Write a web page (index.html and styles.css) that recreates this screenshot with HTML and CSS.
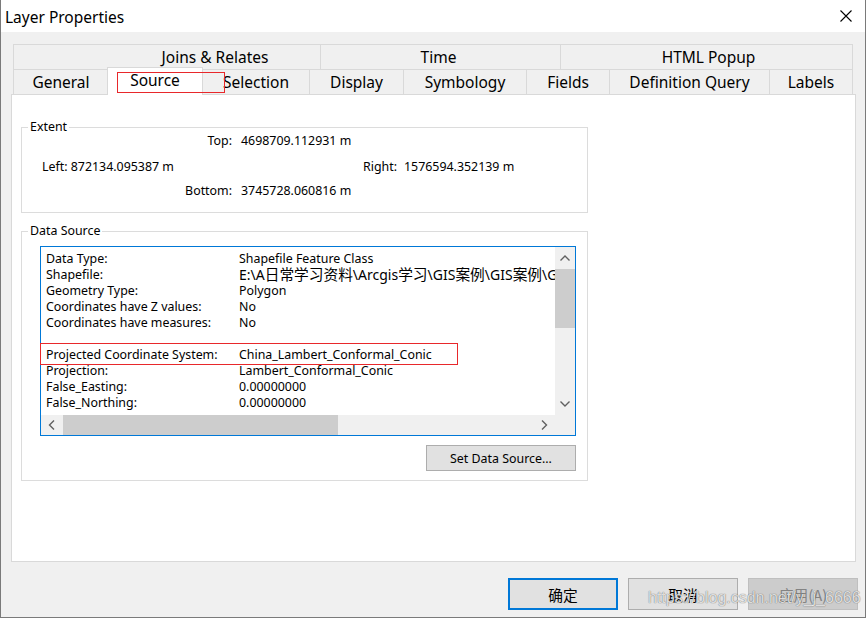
FILE: index.html
```html
<!DOCTYPE html>
<html lang="en">
<head>
<meta charset="utf-8">
<title>Layer Properties</title>
<link rel="stylesheet" href="styles.css">
</head>
<body>
<div class="window">
  <div class="titlebar">
    <span class="title">Layer Properties</span>
    <svg class="close" width="12" height="12" viewBox="0 0 12 12"><path d="M0.5 0.5 L11.5 11.5 M11.5 0.5 L0.5 11.5" stroke="#000" stroke-width="1.1" fill="none"/></svg>
  </div>
  <div class="body">
    <div class="tabctl">
      <div class="tabrow row1">
        <div class="tab t-joins">Joins &amp; Relates</div>
        <div class="tab t-time">Time</div>
        <div class="tab t-html">HTML Popup</div>
      </div>
      <div class="tabrow row2">
        <div class="tab t-general">General</div>
        <div class="tab t-source active">Source<span class="mark mark-tab"></span></div>
        <div class="tab t-selection">Selection</div>
        <div class="tab t-display">Display</div>
        <div class="tab t-symbology">Symbology</div>
        <div class="tab t-fields">Fields</div>
        <div class="tab t-defq">Definition Query</div>
        <div class="tab t-labels">Labels</div>
      </div>
      <div class="panel">
        <div class="group extent">
          <div class="group-title">Extent</div>
          <div class="ext-row r-top"><span class="ext-lbl">Top:</span><span class="ext-val">4698709.112931 m</span></div>
          <div class="ext-row r-mid"><span class="ext-left">Left: 872134.095387 m</span><span class="ext-rlbl">Right:</span><span class="ext-rval">1576594.352139 m</span></div>
          <div class="ext-row r-bot"><span class="ext-lbl">Bottom:</span><span class="ext-val">3745728.060816 m</span></div>
        </div>
        <div class="group datasrc">
          <div class="group-title">Data Source</div>
          <div class="listbox">
            <div class="lb-main">
              <div class="lb-content">
                <div class="lb-row"><span class="lb-lbl">Data Type:</span><span class="lb-val">Shapefile Feature Class</span></div>
                <div class="lb-row"><span class="lb-lbl">Shapefile:</span><span class="lb-val path">E:\A<span class="cjk">日常学习资料</span>\Arcgis<span class="cjk">学习</span>\GIS<span class="cjk">案例</span>\GIS<span class="cjk">案例</span>\GIS<span class="cjk">案例</span>.shp</span></div>
                <div class="lb-row"><span class="lb-lbl">Geometry Type:</span><span class="lb-val">Polygon</span></div>
                <div class="lb-row"><span class="lb-lbl">Coordinates have Z values:</span><span class="lb-val">No</span></div>
                <div class="lb-row"><span class="lb-lbl">Coordinates have measures:</span><span class="lb-val">No</span></div>
                <div class="lb-row"></div>
                <div class="lb-row"><span class="lb-lbl">Projected Coordinate System:</span><span class="lb-val">China_Lambert_Conformal_Conic</span></div>
                <div class="lb-row"><span class="lb-lbl">Projection:</span><span class="lb-val">Lambert_Conformal_Conic</span></div>
                <div class="lb-row"><span class="lb-lbl">False_Easting:</span><span class="lb-val">0.00000000</span></div>
                <div class="lb-row"><span class="lb-lbl">False_Northing:</span><span class="lb-val">0.00000000</span></div>
              </div>
              <div class="vscroll">
                <div class="sb-btn"><svg width="20" height="20" viewBox="0 0 20 20"><polyline points="5.5,13.5 10,9 14.5,13.5" fill="none" stroke="#606060" stroke-width="1.4"/></svg></div>
                <div class="thumb-v"></div>
                <div class="sb-fill"></div>
                <div class="sb-btn"><svg width="20" height="20" viewBox="0 0 20 20"><polyline points="5.5,6.5 10,11 14.5,6.5" fill="none" stroke="#606060" stroke-width="1.4"/></svg></div>
              </div>
            </div>
            <div class="hscroll-row">
              <div class="hscroll">
                <div class="sb-btn"><svg width="20" height="20" viewBox="0 0 20 20"><polyline points="13,5.5 8.5,10 13,14.5" fill="none" stroke="#606060" stroke-width="1.4"/></svg></div>
                <div class="thumb-h"></div>
                <div class="sb-fill"></div>
                <div class="sb-btn"><svg width="20" height="20" viewBox="0 0 20 20"><polyline points="7,5.5 11.5,10 7,14.5" fill="none" stroke="#606060" stroke-width="1.4"/></svg></div>
              </div>
              <div class="corner"></div>
            </div>
            <span class="mark mark-row"></span>
          </div>
          <div class="btn-row"><button class="btn set-ds">Set Data Source...</button></div>
        </div>
      </div>
    </div>
    <div class="footer">
      <button class="btn dlg primary">确定</button>
      <button class="btn dlg">取消</button>
      <button class="btn dlg disabled">应用(A)</button>
    </div>
  </div>
  <div class="watermark">https://blog.csdn.net/y_j_6666</div>
</div>
</body>
</html>
```

FILE: styles.css
```css
html, body {
  margin: 0;
  padding: 0;
  background: #ffffff;
}
body {
  font-family: "Noto Sans", "Noto Sans CJK SC", sans-serif;
  color: #000;
}
.window {
  position: relative;
  box-sizing: border-box;
  width: 866px;
  height: 618px;
  border-left: 1px solid #7a7a7a;
  border-right: 1px solid #7a7a7a;
  border-bottom: 1px solid #7a7a7a;
  display: flex;
  flex-direction: column;
  overflow: hidden;
}
.titlebar {
  height: 32px;
  flex: none;
  background: #fff;
  display: flex;
  align-items: flex-start;
}
.title {
  font-size: 15.5px;
  line-height: 32px;
  padding-left: 4px;
  padding-top: 1px;
}
.close {
  margin-left: auto;
  margin-right: 13px;
  margin-top: 10px;
}
.body {
  flex: 1;
  background: #f0f0f0;
  display: flex;
  flex-direction: column;
}
.tabctl {
  margin: 12px 0 0 10px;
  width: 845px;
}
.tabrow {
  display: flex;
  margin-left: 2px;
  height: 25px;
  align-items: flex-start;
}
.tab {
  box-sizing: border-box;
  height: 25px;
  border-top: 1px solid #d9d9d9;
  border-left: 1px solid #d9d9d9;
  text-align: center;
  line-height: 24px;
  font-size: 15.5px;
  white-space: nowrap;
}
.tab:last-child {
  border-right: 1px solid #d9d9d9;
}
.t-joins { width: 307px; padding-left: 96px; }
.t-time { width: 240px; padding-right: 4px; }
.t-html { width: 293px; padding-left: 4px; }
.t-general { width: 95px; }
.t-source { width: 96px; }
.t-selection { width: 107px; }
.t-display { width: 94px; }
.t-symbology { width: 123px; }
.t-fields { width: 83px; }
.t-defq { width: 160px; }
.t-labels { width: 84px; }
.tab.active {
  position: relative;
  z-index: 2;
  height: 28px;
  margin: -2px -1px 0 -1px;
  background: #fff;
  border-right: 1px solid #d9d9d9;
}
.mark {
  position: absolute;
  box-sizing: border-box;
  border: 1px solid #e8282b;
  pointer-events: none;
}
.mark-tab {
  left: 9px;
  top: 4px;
  width: 108px;
  height: 21px;
}
.panel {
  box-sizing: border-box;
  height: 468px;
  border: 1px solid #d9d9d9;
  background: #fff;
  padding-top: 32px;
  padding-left: 9px;
}
.group {
  box-sizing: border-box;
  width: 567px;
  border: 1px solid #dcdcdc;
  font-size: 12.4px;
}
.group-title {
  width: fit-content;
  margin: -9px 0 0 6px;
  padding: 0 2px;
  background: #fff;
  line-height: 16px;
}
.extent {
  padding-bottom: 13px;
}
.ext-row {
  display: flex;
  line-height: 16px;
  white-space: nowrap;
}
.r-top { margin-top: -2px; }
.r-mid { margin-top: 10px; }
.r-bot { margin-top: 8px; }
.ext-lbl {
  width: 210px;
  text-align: right;
}
.ext-val {
  margin-left: 9px;
}
.ext-left {
  box-sizing: border-box;
  width: 341px;
  padding-left: 20px;
}
.ext-rlbl {
  width: 41px;
}
.datasrc {
  margin-top: 18px;
  padding-bottom: 9px;
}
.listbox {
  position: relative;
  box-sizing: border-box;
  height: 190px;
  margin: 7px 11px 0 18px;
  border: 1px solid #0078d7;
  background: #fff;
  display: flex;
  flex-direction: column;
}
.lb-main {
  flex: 1;
  min-height: 0;
  display: flex;
}
.lb-content {
  flex: 1;
  min-width: 0;
  overflow: hidden;
  padding: 4px 0 0 5px;
  line-height: 16px;
  white-space: nowrap;
}
.lb-row {
  height: 16px;
  display: flex;
}
.lb-lbl {
  flex: none;
  width: 193px;
}
.lb-val {
  flex: none;
  line-height: 16px;
}
.path {
  font-size: 14px;
}
.cjk {
  font-family: "Noto Sans CJK SC", sans-serif;
  font-size: 14.7px;
  line-height: 14px;
}
.vscroll {
  width: 20px;
  flex: none;
  background: #f0f0f0;
  display: flex;
  flex-direction: column;
}
.sb-btn {
  width: 20px;
  height: 20px;
  flex: none;
}
.sb-btn svg {
  display: block;
}
.sb-fill {
  flex: 1;
}
.thumb-v {
  margin-top: 2px;
  height: 59px;
  background: #cdcdcd;
}
.hscroll-row {
  height: 20px;
  flex: none;
  display: flex;
}
.hscroll {
  flex: 1;
  background: #f0f0f0;
  display: flex;
}
.thumb-h {
  margin-left: 2px;
  width: 275px;
  background: #cdcdcd;
}
.corner {
  width: 20px;
  background: #f0f0f0;
}
.mark-row {
  left: -1px;
  top: 96px;
  width: 418px;
  height: 22px;
}
.btn-row {
  display: flex;
  justify-content: flex-end;
  margin: 9px 11px 0 0;
}
.btn {
  box-sizing: border-box;
  margin: 0;
  padding: 0;
  font-family: "Noto Sans", "Noto Sans CJK SC", sans-serif;
  color: #000;
  background: #e1e1e1;
  border: 1px solid #adadad;
}
.set-ds {
  width: 150px;
  height: 26px;
  font-size: 12.4px;
}
.footer {
  display: flex;
  justify-content: flex-end;
  gap: 10px;
  margin-top: 16px;
  padding-right: 7px;
}
.dlg {
  width: 110px;
  height: 32px;
  font-family: "Noto Sans CJK SC", sans-serif;
  font-size: 14.7px;
}
.dlg.primary {
  border: 2px solid #0078d7;
}
.dlg.disabled {
  background: #cccccc;
  border-color: #bfbfbf;
  color: #838383;
}
.watermark {
  position: absolute;
  left: 647px;
  top: 588px;
  font-family: "Liberation Sans", Arial, sans-serif;
  font-size: 16px;
  line-height: 20px;
  color: rgba(255, 255, 255, 0.8);
  text-shadow: 0 0 1px rgba(0, 0, 0, 0.45), 0 0 1px rgba(0, 0, 0, 0.3);
  white-space: nowrap;
  pointer-events: none;
}
```
